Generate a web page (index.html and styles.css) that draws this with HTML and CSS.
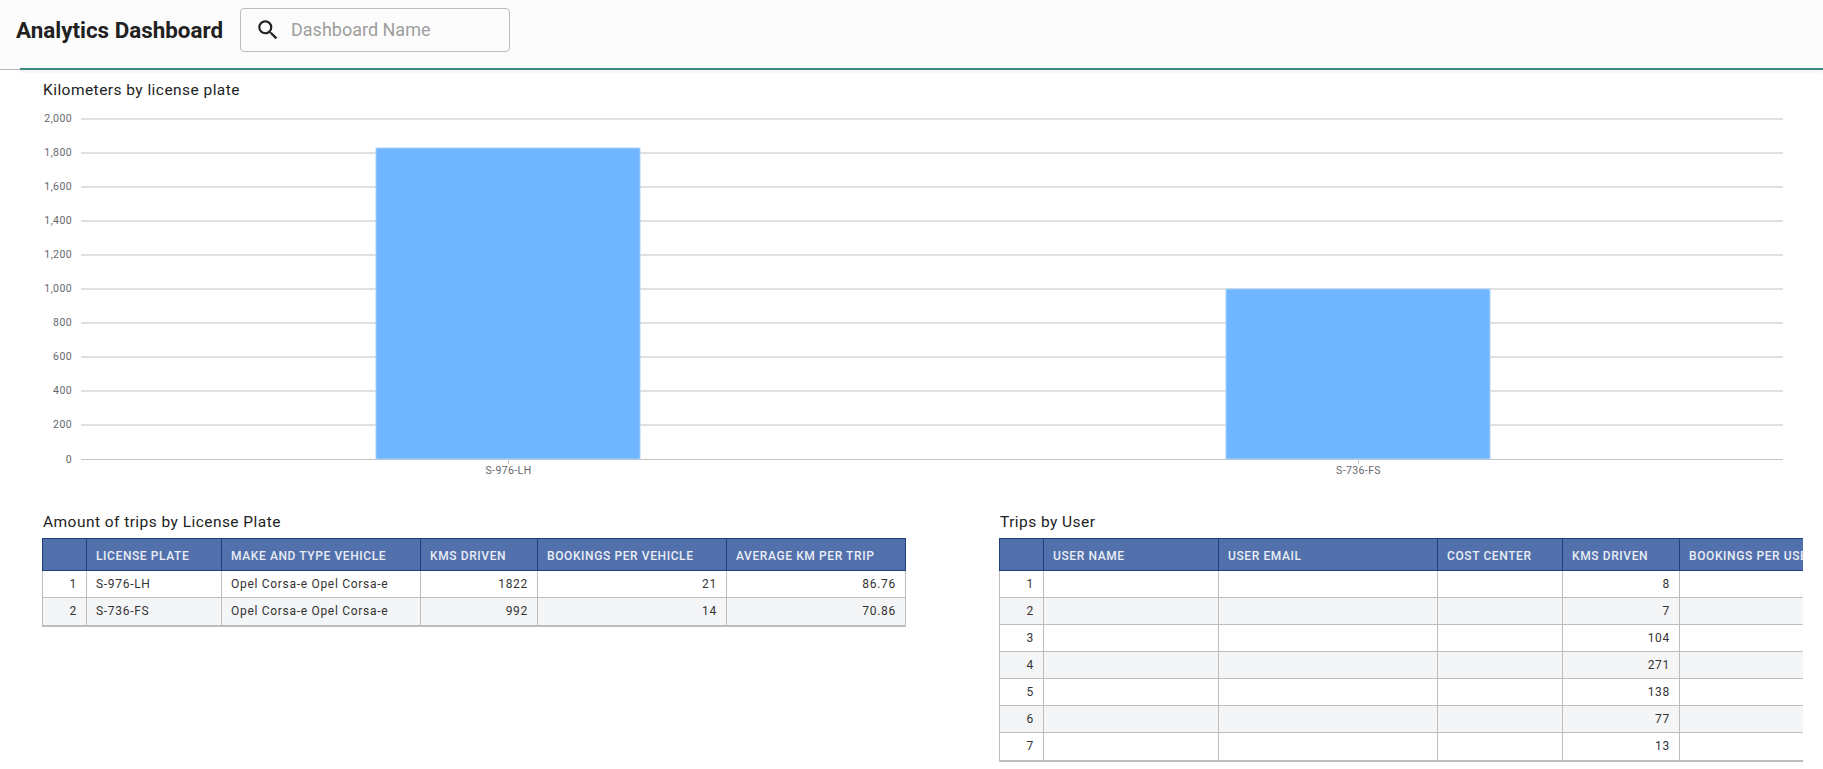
FILE: index.html
```html
<!DOCTYPE html>
<html lang="en">
<head>
    <meta charset="UTF-8">
    <title>Analytics Dashboard</title>
    <link rel="stylesheet" href="styles.css">
</head>
<body>
    <header class="topbar">
        <h1 class="topbar-title">Analytics Dashboard</h1>
        <div class="search">
            <svg class="search-icon" viewBox="0 0 24 24" width="26" height="26">
                <path d="M15.5 14h-.79l-.28-.27A6.47 6.47 0 0 0 16 9.5 6.5 6.5 0 1 0 9.5 16c1.61 0 3.09-.59 4.23-1.57l.27.28v.79l5 4.99L20.49 19l-4.99-5zm-6 0C7.01 14 5 11.99 5 9.5S7.01 5 9.5 5 14 7.01 14 9.5 11.99 14 9.5 14z"/>
            </svg>
            <span class="search-placeholder">Dashboard Name</span>
        </div>
    </header>

    <main class="content">
        <section class="chart-section">
            <h2 class="panel-title">Kilometers by license plate</h2>
            <svg class="chart" width="1823" height="392" viewBox="0 0 1823 392">
                <g class="grid">
                    <line x1="81" x2="1783" y1="30" y2="30"/>
                    <line x1="81" x2="1783" y1="64" y2="64"/>
                    <line x1="81" x2="1783" y1="98" y2="98"/>
                    <line x1="81" x2="1783" y1="132" y2="132"/>
                    <line x1="81" x2="1783" y1="166" y2="166"/>
                    <line x1="81" x2="1783" y1="200" y2="200"/>
                    <line x1="81" x2="1783" y1="234" y2="234"/>
                    <line x1="81" x2="1783" y1="268" y2="268"/>
                    <line x1="81" x2="1783" y1="302" y2="302"/>
                    <line x1="81" x2="1783" y1="336" y2="336"/>
                </g>
                <line class="axis" x1="81" x2="1783" y1="370.5" y2="370.5"/>
                <line class="axis" x1="508.5" x2="508.5" y1="370" y2="375"/>
                <line class="axis" x1="1358.5" x2="1358.5" y1="370" y2="375"/>
                <rect class="bar" x="376" y="59" width="264" height="311"/>
                <rect class="bar" x="1226" y="200" width="264" height="170"/>
                <g class="y-labels">
                    <text x="72" y="33">2,000</text>
                    <text x="72" y="67">1,800</text>
                    <text x="72" y="101">1,600</text>
                    <text x="72" y="135">1,400</text>
                    <text x="72" y="169">1,200</text>
                    <text x="72" y="203">1,000</text>
                    <text x="72" y="237">800</text>
                    <text x="72" y="271">600</text>
                    <text x="72" y="305">400</text>
                    <text x="72" y="339">200</text>
                    <text x="72" y="374">0</text>
                </g>
                <g class="x-labels">
                    <text x="508.5" y="385">S-976-LH</text>
                    <text x="1358.5" y="385">S-736-FS</text>
                </g>
            </svg>
        </section>

        <div class="tables">
            <section class="table-panel table-panel-trips">
                <h2 class="panel-title">Amount of trips by License Plate</h2>
                <div class="table-wrap">
                    <table class="data-table">
                        <colgroup>
                            <col class="c44"><col class="c135"><col class="c199"><col class="c117"><col class="c189"><col class="c179">
                        </colgroup>
                        <thead>
                            <tr>
                                <th></th>
                                <th>LICENSE PLATE</th>
                                <th>MAKE AND TYPE VEHICLE</th>
                                <th>KMS DRIVEN</th>
                                <th>BOOKINGS PER VEHICLE</th>
                                <th>AVERAGE KM PER TRIP</th>
                            </tr>
                        </thead>
                        <tbody>
                            <tr>
                                <td class="num">1</td><td>S-976-LH</td><td>Opel Corsa-e Opel Corsa-e</td>
                                <td class="num">1822</td><td class="num">21</td><td class="num">86.76</td>
                            </tr>
                            <tr>
                                <td class="num">2</td><td>S-736-FS</td><td>Opel Corsa-e Opel Corsa-e</td>
                                <td class="num">992</td><td class="num">14</td><td class="num">70.86</td>
                            </tr>
                        </tbody>
                    </table>
                </div>
            </section>

            <section class="table-panel table-panel-users">
                <h2 class="panel-title">Trips by User</h2>
                <div class="table-wrap table-wrap-clip">
                    <table class="data-table data-table-users">
                        <colgroup>
                            <col class="c44"><col class="c175"><col class="c219"><col class="c125"><col class="c117"><col class="c124">
                        </colgroup>
                        <thead>
                            <tr>
                                <th></th>
                                <th>USER NAME</th>
                                <th>USER EMAIL</th>
                                <th>COST CENTER</th>
                                <th>KMS DRIVEN</th>
                                <th>BOOKINGS PER USER</th>
                            </tr>
                        </thead>
                        <tbody>
                            <tr><td class="num">1</td><td></td><td></td><td></td><td class="num">8</td><td></td></tr>
                            <tr><td class="num">2</td><td></td><td></td><td></td><td class="num">7</td><td></td></tr>
                            <tr><td class="num">3</td><td></td><td></td><td></td><td class="num">104</td><td></td></tr>
                            <tr><td class="num">4</td><td></td><td></td><td></td><td class="num">271</td><td></td></tr>
                            <tr><td class="num">5</td><td></td><td></td><td></td><td class="num">138</td><td></td></tr>
                            <tr><td class="num">6</td><td></td><td></td><td></td><td class="num">77</td><td></td></tr>
                            <tr><td class="num">7</td><td></td><td></td><td></td><td class="num">13</td><td></td></tr>
                        </tbody>
                    </table>
                </div>
            </section>
        </div>
    </main>
</body>
</html>
```

FILE: styles.css
```css
html, body {
    height: 100%;
}

body {
    margin: 0;
    background-color: #fff;
    font-family: "Roboto", "Liberation Sans", sans-serif;
    color: #1f1f1f;
    overflow: hidden;
}

/* Top bar */
.topbar {
    position: relative;
    display: flex;
    align-items: center;
    height: 70px;
    box-sizing: border-box;
    padding: 0 0 10px 16px;
    background: #fcfcfc;
    border-bottom: 1px solid #b4b4b4;
}

/* teal rule and soft shadow, starts a little in from the left */
.topbar::after {
    content: "";
    position: absolute;
    left: 20px;
    right: 0;
    bottom: -1px;
    height: 2px;
    background: #3f8a80;
    box-shadow: 0 2px 3px rgba(0, 0, 0, 0.08);
}

.topbar-title {
    margin: 0;
    width: 224px;
    flex: none;
    font-size: 22.4px;
    font-weight: 700;
    color: #212121;
}

.search {
    display: flex;
    align-items: center;
    width: 270px;
    height: 44px;
    box-sizing: border-box;
    padding-left: 14px;
    gap: 10px;
    border: 1px solid #bdbdbd;
    border-radius: 4px;
}

.search-icon {
    flex: none;
    fill: #212121;
}

.search-placeholder {
    font-size: 18px;
    color: #9e9e9e;
}

/* Chart */
.panel-title {
    margin: 0;
    font-size: 15.5px;
    line-height: 20px;
    font-weight: 400;
    letter-spacing: 0.45px;
    color: #222;
}

.chart-section .panel-title {
    padding: 10px 0 0 43px;
}

.chart {
    display: block;
    margin-top: -11px;
}

.grid line {
    stroke: #e0e0e0;
    stroke-width: 2;
}

.axis {
    stroke: #c4c4c4;
    stroke-width: 1;
}

.bar {
    fill: #6fb5ff;
    stroke: #a8d2fb;
    stroke-width: 1;
}

.y-labels text, .x-labels text {
    font-size: 10.5px;
    letter-spacing: 0.4px;
    fill: #66666e;
}

.y-labels text {
    text-anchor: end;
}

.x-labels text {
    text-anchor: middle;
}

/* Tables */
.tables {
    display: flex;
    align-items: flex-start;
    padding: 0 20px 0 42px;
    margin-top: 31px;
}

.table-panel .panel-title {
    padding-left: 1px;
    margin-bottom: 6px;
}

.table-panel-trips {
    width: 957px;
    flex: none;
}

.table-panel-users {
    width: 804px;
    flex: none;
}

.table-wrap {
    width: max-content;
    border-bottom: 2px solid #bdbdbd;
}

.table-wrap-clip {
    width: 804px;
    overflow: hidden;
}

.data-table {
    border-collapse: collapse;
    table-layout: fixed;
    width: max-content;
    font-size: 12px;
    letter-spacing: 0.7px;
    color: #333;
}

.c44 { width: 44px; }
.c117 { width: 117px; }
.c124 { width: 124px; }
.c125 { width: 125px; }
.c135 { width: 135px; }
.c175 { width: 175px; }
.c179 { width: 179px; }
.c189 { width: 189px; }
.c199 { width: 199px; }
.c219 { width: 219px; }

.data-table th {
    height: 28px;
    padding: 3px 9px 0;
    background: #5270ac;
    border: 1px solid #1f3f7f;
    color: #e9edf5;
    font-weight: 500;
    letter-spacing: 0.6px;
    text-align: left;
    white-space: nowrap;
    overflow: hidden;
}

.data-table td {
    height: 27px;
    box-sizing: border-box;
    padding: 0 9px;
    border: 1px solid #bdbdbd;
    white-space: nowrap;
}

.data-table td.num {
    text-align: right;
}

.data-table tbody tr:nth-child(even) td {
    background: #f4f5f7;
}

.data-table tbody tr:last-child td {
    border-bottom: 0;
}

.data-table-users th:last-child {
    border-right: 0;
}
```
